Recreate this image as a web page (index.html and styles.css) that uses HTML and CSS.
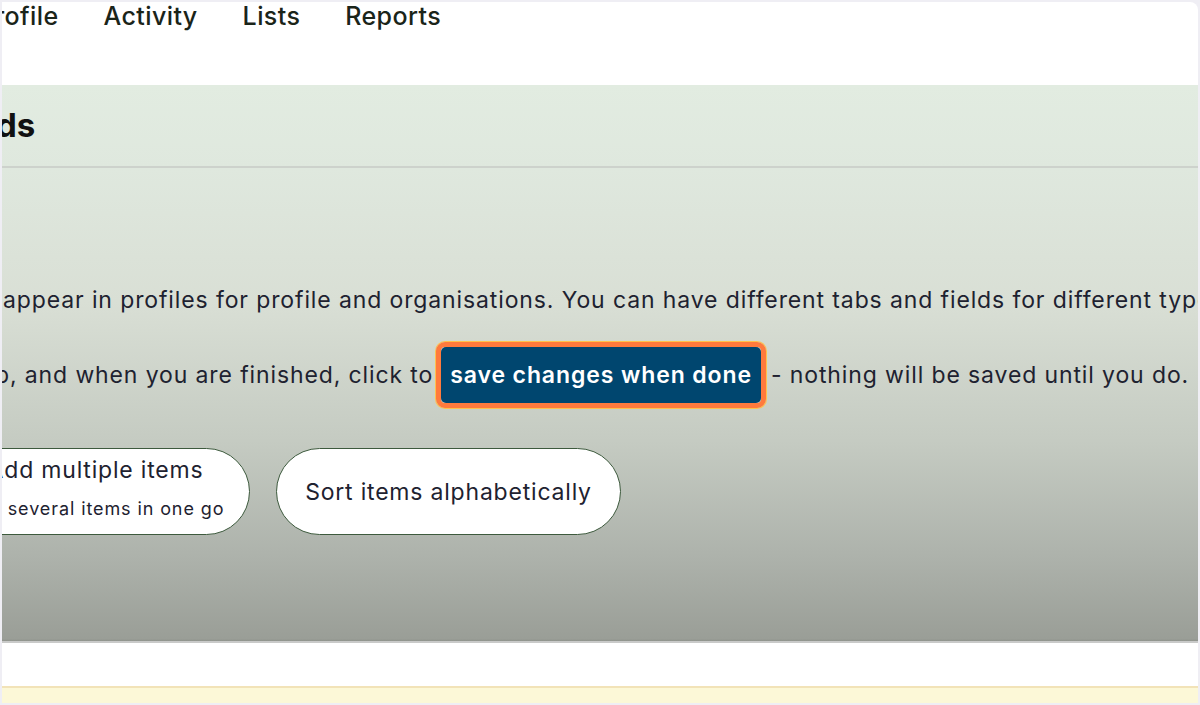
FILE: index.html
```html
<!DOCTYPE html>
<html lang="en">
<head>
<meta charset="utf-8">
<title>Custom fields</title>
<link rel="stylesheet" href="styles.css">
</head>
<body>
<div class="frame">
  <nav class="nav">
    <a class="nav-item nav-first">rofile</a>
    <a class="nav-item">Activity</a>
    <a class="nav-item">Lists</a>
    <a class="nav-item">Reports</a>
  </nav>
  <section class="panel">
    <h1 class="title">ds</h1>
    <hr class="divider">
    <p class="para para-one">appear in profiles for profile and organisations. You can have different tabs and fields for different types.</p>
    <p class="para para-two"><span class="cut">p, and when you are finished, click to</span><span class="highlight"><span class="save-btn">save changes when done</span></span><span class="after">- nothing will be saved until you do.</span></p>
    <div class="actions">
      <button class="pill pill-multi"><span class="pill-title">Add multiple items</span><span class="pill-sub">Add several items in one go</span></button>
      <button class="pill pill-sort"><span class="pill-title">Sort items alphabetically</span></button>
    </div>
  </section>
  <div class="spacer"></div>
  <div class="notice"></div>
</div>
</body>
</html>
```
FILE: styles.css
```css
* { box-sizing: border-box; }
html, body { margin: 0; padding: 0; }
body {
  background: #efeef4;
  font-family: Inter, "Noto Sans", sans-serif;
  color: #1d2226;
  width: 1200px;
  height: 705px;
  overflow: hidden;
}
.frame {
  margin: 2px 2px 0 2px;
  height: 701px;
  background: #fff;
  border-radius: 0 8px 0 0;
  overflow: hidden;
  display: flex;
  flex-direction: column;
}
.nav {
  height: 83px;
  flex: none;
  display: flex;
  gap: 45px;
  align-items: flex-start;
}
.nav-item {
  font-size: 25px;
  line-height: 28px;
  font-weight: 500;
  letter-spacing: 0.4px;
  color: #1a2419;
}
.nav-first { margin-left: -7px; }
.panel {
  height: 558px;
  flex: none;
  background: linear-gradient(180deg, #e2ece1 0%, #dfe8de 15%, #d9dfd5 39%, #c5cbc2 64%, #adb2ab 85%, #9a9e97 99.6%, #8f938c 100%);
  border-bottom: 2px solid #c9cac9;
  overflow: hidden;
}
.title {
  margin: 20px 0 0 -6px;
  font-size: 33px;
  line-height: 40px;
  font-weight: 700;
  color: #111;
}
.divider {
  margin: 21px 0 0 0;
  border: 0;
  height: 2px;
  background: #cdd2cc;
}
.para {
  margin: 0;
  white-space: nowrap;
  font-size: 23px;
  letter-spacing: 0.88px;
  color: #1e2230;
}
.para-one {
  margin-top: 117px;
  line-height: 30px;
  margin-left: 1px;
}
.para-two {
  margin-top: 27px;
  height: 66px;
  display: flex;
  align-items: center;
}
.cut { margin-left: -7px; }
.highlight {
  margin-left: 3px;
  margin-right: 5px;
  border: 5px solid #ff7a3d;
  border-radius: 9px;
  box-shadow: 0 0 0 1px #ffc24d;
  display: flex;
}
.save-btn {
  display: block;
  background: #00466f;
  color: #fff;
  font-weight: 600;
  letter-spacing: 0.9px;
  border-radius: 5px;
  padding: 0 9px;
  height: 56px;
  line-height: 56px;
}
.actions {
  margin-top: 40px;
  margin-left: -63px;
  display: flex;
  gap: 26px;
}
.pill {
  height: 87px;
  background: #fff;
  border: 1.5px solid #3d5a3d;
  border-radius: 44px;
  font-family: inherit;
  color: #1e2230;
  display: flex;
  flex-direction: column;
  align-items: center;
  justify-content: center;
  padding: 0;
}
.pill-multi { width: 311px; gap: 12px; padding-bottom: 7px; }
.pill-sort { width: 345px; }
.pill-title { font-size: 23px; line-height: 30px; letter-spacing: 0.8px; }
.pill-multi .pill-title { margin-left: 2px; }
.pill-sub { font-size: 18px; line-height: 24px; letter-spacing: 0.9px; }
.spacer {
  height: 43px;
  flex: none;
  background: #fff;
}
.notice {
  flex: 1;
  background: #fcf8d7;
  border-top: 2px solid #f2e3b8;
}
```
